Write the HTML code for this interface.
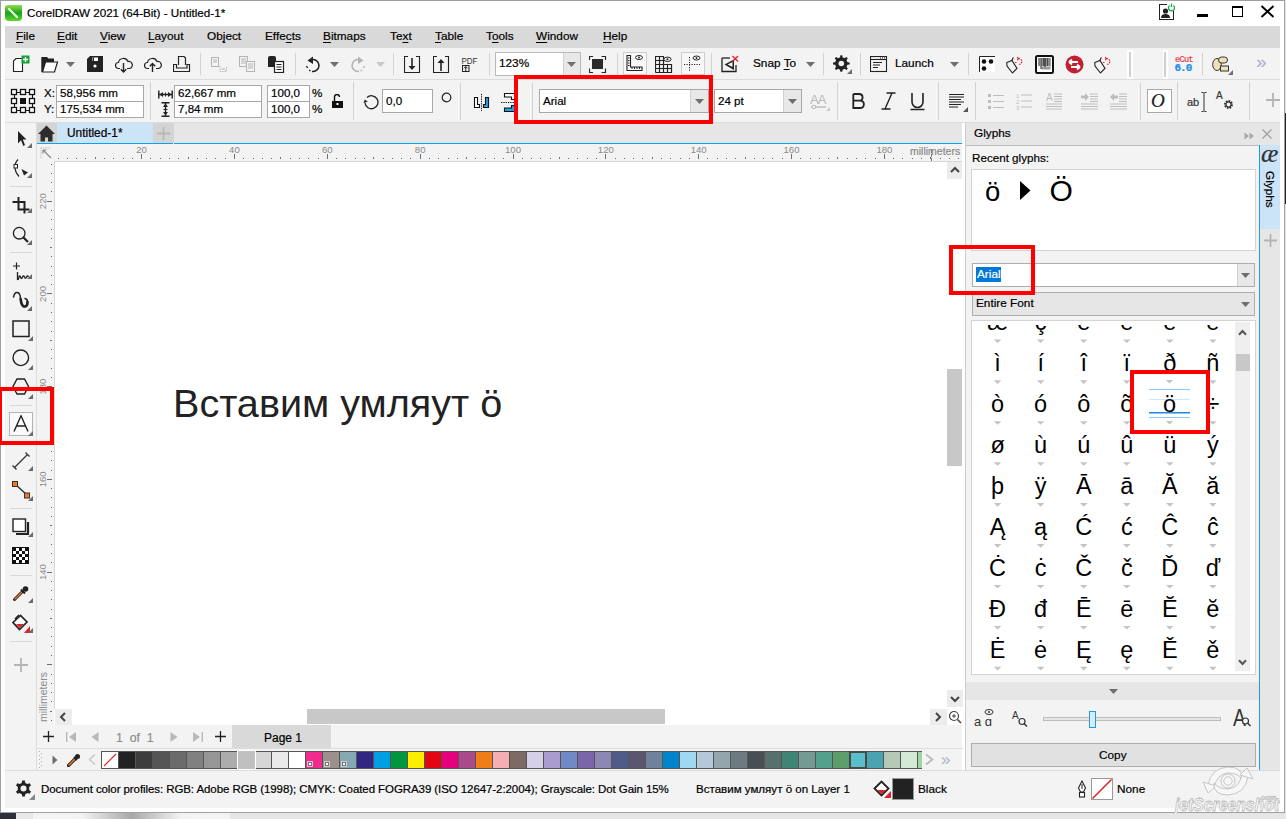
<!DOCTYPE html><html><head><meta charset="utf-8"><style>
*{margin:0;padding:0;box-sizing:border-box}
html,body{width:1286px;height:819px;overflow:hidden;background:#e6e6e6;font-family:"Liberation Sans",sans-serif}
.t{position:absolute;white-space:nowrap;line-height:1;font-family:"Liberation Sans",sans-serif;-webkit-text-stroke:0.2px currentColor}
div{position:absolute}
u{text-decoration:underline;text-underline-offset:2px}
</style></head><body><div style="position:absolute;left:0px;top:813px;width:16px;height:6px;background:#2b2f38"></div><div style="position:absolute;left:16px;top:813px;width:17px;height:6px;background:#e8e8e8"></div><div style="position:absolute;left:33px;top:813px;width:197px;height:6px;background:linear-gradient(90deg,#f4f4f4 0%,#f3f3f3 25%,#a8a8a8 50%,#f3f3f3 75%,#f4f4f4 100%)"></div><div style="position:absolute;left:230px;top:813px;width:1056px;height:6px;background:#e6e6e6"></div><div style="position:absolute;left:1285px;top:113px;width:1px;height:91px;background:#222"></div><div style="position:absolute;left:0px;top:0px;width:1285px;height:813px;background:#fff;border:1px solid #a0a0a0"></div><svg style="position:absolute;left:5px;top:5px;" width="17" height="16" viewBox="0 0 17 16"><defs><linearGradient id="g1" x1="0" y1="0" x2="0" y2="1"><stop offset="0" stop-color="#8fe04a"/><stop offset="0.5" stop-color="#1f9e1f"/><stop offset="1" stop-color="#5fd82a"/></linearGradient></defs><path d="M3 0H17V12Q17 16 13 16H4Q0 16 0 12V3Q0 0 3 0Z" fill="url(#g1)"/><path d="M4 4L12 12" stroke="#e8ffe0" stroke-width="2.2" stroke-linecap="round"/></svg><div class="t" style="left:27px;top:7px;font-size:11.65px;color:#000;">CorelDRAW 2021 (64-Bit) - Untitled-1*</div><div style="position:absolute;left:5px;top:26px;width:1275px;height:22px;background:#d9d9d9"></div><div class="t" style="left:16px;top:31px;font-size:11.8px;color:#000;"><u>F</u>ile</div><div class="t" style="left:57px;top:31px;font-size:11.8px;color:#000;"><u>E</u>dit</div><div class="t" style="left:100px;top:31px;font-size:11.8px;color:#000;"><u>V</u>iew</div><div class="t" style="left:148px;top:31px;font-size:11.8px;color:#000;"><u>L</u>ayout</div><div class="t" style="left:207px;top:31px;font-size:11.8px;color:#000;">Ob<u>j</u>ect</div><div class="t" style="left:265px;top:31px;font-size:11.8px;color:#000;">Effe<u>c</u>ts</div><div class="t" style="left:323px;top:31px;font-size:11.8px;color:#000;"><u>B</u>itmaps</div><div class="t" style="left:390px;top:31px;font-size:11.8px;color:#000;">Te<u>x</u>t</div><div class="t" style="left:435px;top:31px;font-size:11.8px;color:#000;"><u>T</u>able</div><div class="t" style="left:486px;top:31px;font-size:11.8px;color:#000;">T<u>o</u>ols</div><div class="t" style="left:536px;top:31px;font-size:11.8px;color:#000;"><u>W</u>indow</div><div class="t" style="left:603px;top:31px;font-size:11.8px;color:#000;"><u>H</u>elp</div><div style="position:absolute;left:5px;top:48px;width:1275px;height:31px;background:#f3f3f3"></div><div style="position:absolute;left:5px;top:79px;width:1275px;height:1px;background:#dcdcdc"></div><div style="position:absolute;left:5px;top:80px;width:1275px;height:42px;background:#f3f3f3"></div><div style="position:absolute;left:5px;top:122px;width:1275px;height:1px;background:#dcdcdc"></div><div style="position:absolute;left:5px;top:123px;width:32px;height:647px;background:#f3f3f3"></div><div style="position:absolute;left:36px;top:123px;width:1px;height:647px;background:#dcdcdc"></div><div style="position:absolute;left:37px;top:123px;width:926px;height:20px;background:#e6e6e6"></div><div style="position:absolute;left:37px;top:123px;width:20px;height:20px;background:#d4d4d4"></div><div style="position:absolute;left:57px;top:123px;width:96px;height:20px;background:#cce4f7"></div><div style="position:absolute;left:153px;top:123px;width:21px;height:20px;background:#d4d4d4"></div><div style="position:absolute;left:37px;top:143px;width:136px;height:1px;background:#08a4f4"></div><div style="position:absolute;left:174px;top:143px;width:789px;height:1px;background:#08a4f4"></div><div style="position:absolute;left:37px;top:144px;width:926px;height:1px;background:#f3f3f3"></div><div style="position:absolute;left:37px;top:144px;width:926px;height:17px;background:#f3f3f3"></div><div style="position:absolute;left:37px;top:161px;width:926px;height:1px;background:#d8d8d8"></div><div style="position:absolute;left:37px;top:161px;width:17px;height:564px;background:#f3f3f3"></div><div style="position:absolute;left:54px;top:161px;width:1px;height:548px;background:#d8d8d8"></div><div style="position:absolute;left:55px;top:162px;width:908px;height:547px;background:#fff"></div><div style="position:absolute;left:947px;top:162px;width:16px;height:547px;background:#fff"></div><div style="position:absolute;left:947px;top:162px;width:16px;height:17px;background:#ececec"></div><div style="position:absolute;left:947px;top:369px;width:15px;height:97px;background:#c8c8c8"></div><div style="position:absolute;left:55px;top:709px;width:908px;height:16px;background:#fff"></div><div style="position:absolute;left:55px;top:709px;width:17px;height:16px;background:#ececec"></div><div style="position:absolute;left:307px;top:709px;width:358px;height:15px;background:#c8c8c8"></div><div style="position:absolute;left:37px;top:725px;width:926px;height:24px;background:#f3f3f3"></div><div style="position:absolute;left:232px;top:725px;width:99px;height:24px;background:#d9d9d9"></div><div style="position:absolute;left:37px;top:749px;width:926px;height:21px;background:#f3f3f3"></div><div style="position:absolute;left:962px;top:123px;width:3px;height:647px;background:#fff"></div><div style="position:absolute;left:965px;top:123px;width:1px;height:647px;background:#cdcdcd"></div><div style="position:absolute;left:966px;top:123px;width:314px;height:22px;background:#e6e6e6"></div><div style="position:absolute;left:966px;top:145px;width:293px;height:625px;background:#f3f3f3"></div><div style="position:absolute;left:1259px;top:145px;width:1px;height:625px;background:#1e9be8"></div><div style="position:absolute;left:1260px;top:145px;width:20px;height:84px;background:#cce4f7"></div><div style="position:absolute;left:1260px;top:229px;width:20px;height:541px;background:#e6e6e6"></div><div style="position:absolute;left:5px;top:770px;width:1275px;height:1px;background:#dcdcdc"></div><div style="position:absolute;left:5px;top:771px;width:1275px;height:37px;background:#f3f3f3"></div><svg style="position:absolute;left:1158px;top:3px;" width="18" height="17" viewBox="0 0 18 17"><rect x="1.5" y="1.5" width="14" height="15" fill="none" stroke="#222" stroke-width="1"/><rect x="9" y="0" width="9" height="8" fill="#fff"/><circle cx="7.5" cy="8" r="2.6" fill="#222"/><path d="M3 15Q3 11 7.5 11Q12 11 12 15Z" fill="#222"/><path d="M11.6 2.6A3 3 0 1 0 15.4 2.6" fill="none" stroke="#1aa84a" stroke-width="1.3"/><path d="M13.5 0.5V4" stroke="#1aa84a" stroke-width="1.3"/></svg><div style="position:absolute;left:1197px;top:14px;width:11px;height:3px;background:#000"></div><div style="position:absolute;left:1232px;top:6px;width:11px;height:11px;border:1px solid #000;border-top:2px solid #000"></div><svg style="position:absolute;left:1260px;top:5px;" width="15" height="13" viewBox="0 0 15 13"><path d="M1.5 1L13.5 12M13.5 1L1.5 12" stroke="#000" stroke-width="1.9"/></svg><svg style="position:absolute;left:12px;top:55px;" width="18" height="18" viewBox="0 0 18 18"><path d="M4 3.5H10.5V16.5H1.5V6Z" fill="#fff" stroke="#222" stroke-width="1.1"/><rect x="9.5" y="0.5" width="8" height="8" fill="#15a339"/><path d="M13.5 2V7M11 4.5H16" stroke="#fff" stroke-width="1.4"/></svg><svg style="position:absolute;left:41px;top:56px;" width="18" height="17" viewBox="0 0 18 17"><path d="M1 1H6L7.5 2.5H13V6H4.5L1.5 16H1Z" fill="#222"/><path d="M4.5 6H16.5L13.5 16H1.5Z" fill="#fff" stroke="#222" stroke-width="1.2"/><path d="M1 1V16" stroke="#222" stroke-width="1.4"/></svg><svg style="position:absolute;left:66px;top:62px;" width="9" height="5" viewBox="0 0 9 5"><path d="M0 0H9L4.5 5Z" fill="#6e6e6e"/></svg><svg style="position:absolute;left:87px;top:56px;" width="17" height="17" viewBox="0 0 17 17"><path d="M0 3L3 0H16V16H0Z" fill="#222"/><rect x="5" y="1.5" width="6" height="3.5" fill="#fff"/><rect x="5.5" y="1.5" width="1.5" height="3.5" fill="#222"/><circle cx="8" cy="10" r="1.6" fill="#fff"/></svg><svg style="position:absolute;left:115px;top:56px;" width="18" height="17" viewBox="0 0 18 17"><path d="M5 12.5H3.5A3 3 0 0 1 3.5 6.5A5 5 0 0 1 13 5.5A3.3 3.3 0 0 1 14.5 12.5H12" fill="none" stroke="#222" stroke-width="1.2"/><path d="M8.5 7V16M5.8 13.3L8.5 16L11.2 13.3" fill="none" stroke="#222" stroke-width="1.4"/></svg><svg style="position:absolute;left:144px;top:56px;" width="18" height="17" viewBox="0 0 18 17"><path d="M5 12.5H3.5A3 3 0 0 1 3.5 6.5A5 5 0 0 1 13 5.5A3.3 3.3 0 0 1 14.5 12.5H12" fill="none" stroke="#222" stroke-width="1.2"/><path d="M8.5 16V7.5M5.8 10.2L8.5 7.5L11.2 10.2" fill="none" stroke="#222" stroke-width="1.4"/></svg><svg style="position:absolute;left:173px;top:56px;" width="18" height="17" viewBox="0 0 18 17"><path d="M5.5 9V0.5H11L12.5 2V9" fill="none" stroke="#222" stroke-width="1.2"/><path d="M0.5 8.5H3.5V12H14V8.5H16.5V15.5H0.5Z" fill="none" stroke="#222" stroke-width="1.2"/></svg><div style="position:absolute;left:200px;top:53px;width:1px;height:22px;background:#d2d2d2"></div><svg style="position:absolute;left:210px;top:56px;" width="18" height="17" viewBox="0 0 18 17"><rect x="1.5" y="1.5" width="7" height="9" fill="none" stroke="#b4b4b4"/><path d="M3 4H7M3 6H7" stroke="#b4b4b4"/><path d="M10 10V15.5H16.5V10" fill="none" stroke="#b4b4b4" stroke-dasharray="1.5 1"/><path d="M11.5 13H15" stroke="#b4b4b4"/></svg><svg style="position:absolute;left:239px;top:56px;" width="18" height="17" viewBox="0 0 18 17"><rect x="0.5" y="0.5" width="8" height="10" fill="none" stroke="#b4b4b4"/><path d="M2 3H7M2 5H7M2 7H7" stroke="#b4b4b4"/><rect x="7.5" y="5.5" width="8" height="10" fill="#f3f3f3" stroke="#b4b4b4"/><path d="M9 8H14M9 10H14M9 12H14" stroke="#b4b4b4"/></svg><svg style="position:absolute;left:268px;top:55px;" width="18" height="18" viewBox="0 0 18 18"><path d="M0 3Q0 1 2 1H6Q8 1 8 3V12H0Z" fill="#222"/><rect x="6.5" y="6.5" width="9" height="11" fill="#fff" stroke="#222" stroke-width="1.2"/><path d="M8.5 9.5H13.5M8.5 12H13.5M8.5 14.5H13.5" stroke="#222" stroke-width="1.2"/></svg><div style="position:absolute;left:295px;top:53px;width:1px;height:22px;background:#d2d2d2"></div><svg style="position:absolute;left:305px;top:56px;" width="18" height="17" viewBox="0 0 18 17"><path d="M4 5A6 6 0 1 1 7 15.5" fill="none" stroke="#222" stroke-width="1.5"/><path d="M8 0.5L2.5 4.5L8 8Z" fill="#222"/><path d="M1.5 10L2.5 12M4 14L5.5 15" stroke="#222" stroke-width="1.3"/></svg><svg style="position:absolute;left:330px;top:62px;" width="9" height="5" viewBox="0 0 9 5"><path d="M0 0H9L4.5 5Z" fill="#6e6e6e"/></svg><svg style="position:absolute;left:349px;top:56px;" width="18" height="17" viewBox="0 0 18 17"><path d="M13 5A6 6 0 1 0 10 15.5" fill="none" stroke="#b4b4b4" stroke-width="1.5"/><path d="M9 0.5L14.5 4.5L9 8Z" fill="#b4b4b4"/><path d="M15.5 10L14.5 12M13 14L11.5 15" stroke="#b4b4b4" stroke-width="1.3"/></svg><svg style="position:absolute;left:376px;top:62px;" width="9" height="5" viewBox="0 0 9 5"><path d="M0 0H9L4.5 5Z" fill="#c8c8c8"/></svg><div style="position:absolute;left:393px;top:53px;width:1px;height:22px;background:#d2d2d2"></div><svg style="position:absolute;left:404px;top:56px;" width="17" height="18" viewBox="0 0 17 18"><path d="M4 0.5H0.5V16.5H15.5V0.5H12" fill="none" stroke="#222" stroke-width="1.1"/><path d="M8 2V11" stroke="#222" stroke-width="1.6"/><path d="M4.5 10H11.5L8 14Z" fill="#222"/></svg><svg style="position:absolute;left:433px;top:56px;" width="17" height="18" viewBox="0 0 17 18"><path d="M4 0.5H0.5V16.5H15.5V0.5H12" fill="none" stroke="#222" stroke-width="1.1"/><path d="M8 6V15" stroke="#222" stroke-width="1.6"/><path d="M4.5 7H11.5L8 3Z" fill="#222"/></svg><svg style="position:absolute;left:461px;top:56px;" width="20" height="9" viewBox="0 0 20 9"><text x="0.5" y="7.8" font-family="Liberation Sans" font-size="9" fill="#333" textLength="16" lengthAdjust="spacingAndGlyphs">PDF</text></svg><svg style="position:absolute;left:462px;top:65px;" width="8" height="7" viewBox="0 0 8 7"><rect x="0.5" y="0.5" width="6.5" height="6" fill="none" stroke="#222"/><path d="M3.75 1.5V6M2 3.3L3.75 1.5L5.5 3.3" fill="none" stroke="#222"/></svg><div style="position:absolute;left:489px;top:53px;width:1px;height:22px;background:#d2d2d2"></div><div style="position:absolute;left:495px;top:52px;width:86px;height:24px;background:#fff;border:1px solid #b9b9b9"></div><div style="position:absolute;left:563px;top:53px;width:17px;height:22px;background:#e8e8e8;border-left:1px solid #d0d0d0"></div><svg style="position:absolute;left:567px;top:62px;" width="9" height="5" viewBox="0 0 9 5"><path d="M0 0H9L4.5 5Z" fill="#6e6e6e"/></svg><div class="t" style="left:499px;top:58px;font-size:11.8px;color:#000;">123%</div><svg style="position:absolute;left:589px;top:56px;" width="18" height="17" viewBox="0 0 18 17"><rect x="3" y="3" width="11" height="10" fill="#2a2a2a"/><path d="M0.5 4V0.5H4M12.5 0.5H16.5V4M16.5 12.5V16.5H12.5M4 16.5H0.5V12.5" fill="none" stroke="#2a2a2a" stroke-width="1.2"/></svg><div style="position:absolute;left:617px;top:53px;width:1px;height:22px;background:#d2d2d2"></div><div style="position:absolute;left:623px;top:52px;width:24px;height:23px;background:#f8f8f8;border:1px solid #cdcdcd"></div><svg style="position:absolute;left:626px;top:55px;" width="18" height="17" viewBox="0 0 18 17"><path d="M1 0.5V15.5H16V12H4.5V0.5Z" fill="none" stroke="#222" stroke-width="1.1"/><path d="M2 3H3.5M2 5.5H3.5M2 8H3.5M2 10.5H3.5M6 14V12M8.5 14V12M11 14V12M13.5 14V12" stroke="#222"/><ellipse cx="13" cy="2.5" rx="3.5" ry="2" fill="none" stroke="#222"/><circle cx="13" cy="2.5" r="0.9" fill="#222"/></svg><svg style="position:absolute;left:655px;top:56px;" width="18" height="17" viewBox="0 0 18 17"><path d="M0.5 16.5V0.5H8.5V16.5M4.5 0.5V16.5M0.5 4.5H8.5M0.5 8.5H16.5V16.5H0.5M0.5 12.5H16.5M12.5 8.5V16.5" fill="none" stroke="#222" stroke-width="1.2"/><ellipse cx="12.5" cy="3.3" rx="3.6" ry="2.2" fill="#f3f3f3" stroke="#222"/><circle cx="12.5" cy="3.3" r="1" fill="#222"/></svg><div style="position:absolute;left:681px;top:52px;width:24px;height:23px;background:#f8f8f8;border:1px solid #cdcdcd"></div><svg style="position:absolute;left:684px;top:55px;" width="18" height="17" viewBox="0 0 18 17"><path d="M5.5 2V17M0 9.5H16" stroke="#222" stroke-dasharray="1.2 1.3"/><ellipse cx="12.5" cy="3" rx="3.5" ry="2" fill="none" stroke="#222"/><circle cx="12.5" cy="3" r="0.9" fill="#222"/></svg><div style="position:absolute;left:711px;top:53px;width:1px;height:22px;background:#d2d2d2"></div><svg style="position:absolute;left:721px;top:55px;" width="19" height="18" viewBox="0 0 19 18"><path d="M1 3V16.5H15V10" fill="none" stroke="#222" stroke-width="1.3"/><path d="M1 3H9" stroke="#222" stroke-width="1.3"/><path d="M3.5 9.5L13 4.5V15Z" fill="#222"/><path d="M6.5 9.5L11.5 7V12Z" fill="#f3f3f3"/><path d="M11.5 1L17 6.5M17 1L11.5 6.5" stroke="#e0202a" stroke-width="1.3"/></svg><div class="t" style="left:753px;top:58px;font-size:11.8px;color:#000;">Snap <u>T</u>o</div><svg style="position:absolute;left:806px;top:62px;" width="9" height="5" viewBox="0 0 9 5"><path d="M0 0H9L4.5 5Z" fill="#6e6e6e"/></svg><div style="position:absolute;left:823px;top:53px;width:1px;height:22px;background:#d2d2d2"></div><svg style="position:absolute;left:833px;top:55px;" width="19" height="19" viewBox="0 0 19 19"><path d="M8 0.5H10L10.5 3A6 6 0 0 1 12.6 4L14.8 2.6L16.2 4L14.8 6.2A6 6 0 0 1 15.8 8.3L18.3 8.8V10.8L15.8 11.3A6 6 0 0 1 14.8 13.4L16.2 15.6L14.8 17L12.6 15.6A6 6 0 0 1 10.5 16.6L10 19H8L7.5 16.6A6 6 0 0 1 5.4 15.6L3.2 17L1.8 15.6L3.2 13.4A6 6 0 0 1 2.2 11.3L-0.3 10.8V8.8L2.2 8.3A6 6 0 0 1 3.2 6.2L1.8 4L3.2 2.6L5.4 4A6 6 0 0 1 7.5 3Z" fill="#222" transform="translate(0.2,-0.3) scale(0.9)"/><circle cx="8.3" cy="8.5" r="2.8" fill="#f3f3f3"/><path d="M14 19L19 14V19Z" fill="#6e6e6e"/></svg><div style="position:absolute;left:860px;top:53px;width:1px;height:22px;background:#d2d2d2"></div><svg style="position:absolute;left:870px;top:56px;" width="18" height="17" viewBox="0 0 18 17"><rect x="0.5" y="0.5" width="16" height="15" fill="none" stroke="#222" stroke-width="1.1"/><path d="M0.5 3.5H16.5" stroke="#222" stroke-width="1.1"/><path d="M10 2H11M12 2H13M14 2H15" stroke="#222"/><path d="M3 6.5H12M3 9H10M3 11.5H8" stroke="#222" stroke-width="1.1"/></svg><div class="t" style="left:895px;top:58px;font-size:11.8px;color:#000;">Launch</div><svg style="position:absolute;left:950px;top:62px;" width="9" height="5" viewBox="0 0 9 5"><path d="M0 0H9L4.5 5Z" fill="#6e6e6e"/></svg><div style="position:absolute;left:968px;top:53px;width:1px;height:22px;background:#d2d2d2"></div><svg style="position:absolute;left:979px;top:56px;" width="18" height="18" viewBox="0 0 18 18"><path d="M0.5 0.5V16" stroke="#222"/><path d="M0.5 0.5H16" stroke="#222"/><rect x="1" y="1" width="15" height="15" fill="#fff"/><circle cx="5" cy="5.5" r="2.3" fill="#111"/><circle cx="12" cy="5.5" r="2.3" fill="#111"/><circle cx="5" cy="12.5" r="2.3" fill="#111"/></svg><svg style="position:absolute;left:1006px;top:56px;" width="18" height="18" viewBox="0 0 18 18"><path d="M0.8 6.5L6 4.5L11 12.5L6.5 17L1 10Z" fill="none" stroke="#222" stroke-width="1.1"/><path d="M5.5 5L7.5 1.5" stroke="#222" stroke-width="1.1"/><path d="M12.5 2.5A3 3 0 1 1 13 8.5" fill="none" stroke="#e0202a" stroke-width="1.2" stroke-dasharray="1.5 1"/><path d="M11 1.2L12.8 2.6L11.2 4" fill="none" stroke="#e0202a" stroke-width="1.1"/><path d="M9 6.5H10.5" stroke="#e0202a"/></svg><svg style="position:absolute;left:1035px;top:55px;" width="19" height="19" viewBox="0 0 19 19"><rect x="1" y="1" width="17" height="17" rx="1.5" fill="#fff" stroke="#111" stroke-width="2"/><rect x="3.5" y="3" width="0.8" height="8" fill="#222"/><rect x="4.6" y="3" width="0.5" height="8" fill="#222"/><rect x="5.5" y="3" width="1.2" height="11" fill="#222"/><rect x="7" y="3" width="0.5" height="8" fill="#222"/><rect x="8" y="3" width="0.8" height="8" fill="#222"/><rect x="9.2" y="3" width="1.6" height="11" fill="#222"/><rect x="11.3" y="3" width="0.5" height="8" fill="#222"/><rect x="12.2" y="3" width="1" height="8" fill="#222"/><rect x="13.6" y="3" width="0.6" height="8" fill="#222"/><rect x="14.6" y="3" width="0.8" height="8" fill="#222"/><rect x="6.5" y="11.5" width="9" height="3" fill="#999"/></svg><svg style="position:absolute;left:1065px;top:55px;" width="19" height="19" viewBox="0 0 19 19"><circle cx="9.5" cy="9.5" r="9" fill="#c2202e"/><path d="M4 7H13M4 7L7 4.5M4 7L7 9.5" fill="none" stroke="#fff" stroke-width="1.8"/><path d="M15 12H6M15 12L12 9.5M15 12L12 14.5" fill="none" stroke="#fff" stroke-width="1.8"/></svg><svg style="position:absolute;left:1094px;top:56px;" width="18" height="18" viewBox="0 0 18 18"><path d="M0.8 6.5L6 4.5L11 12.5L6.5 17L1 10Z" fill="none" stroke="#222" stroke-width="1.1"/><path d="M5.5 5L7.5 1.5" stroke="#222" stroke-width="1.1"/><path d="M12.5 2.5A3 3 0 1 1 13 8.5" fill="none" stroke="#e0202a" stroke-width="1.2" stroke-dasharray="1.5 1"/><path d="M11 1.2L12.8 2.6L11.2 4" fill="none" stroke="#e0202a" stroke-width="1.1"/><path d="M9 6.5H10.5" stroke="#e0202a"/></svg><div style="position:absolute;left:1127px;top:50px;width:6px;height:29px;background:#fff"></div><div style="position:absolute;left:1129px;top:52px;width:2px;height:25px;background:#d0d0d0"></div><div style="position:absolute;left:1163px;top:50px;width:5px;height:29px;background:#fff"></div><div style="position:absolute;left:1164px;top:52px;width:2px;height:25px;background:#d0d0d0"></div><div class="t" style="left:1175px;top:56px;font-size:8.5px;color:#e83a4a;font-family:'Liberation Mono',monospace;letter-spacing:-0.6px">eCut</div><div class="t" style="left:1174.5px;top:63px;font-size:11px;color:#1a8fe8;font-family:'Liberation Mono',monospace;font-weight:bold;letter-spacing:-1px">6.0</div><div style="position:absolute;left:1202px;top:53px;width:1px;height:22px;background:#d2d2d2"></div><svg style="position:absolute;left:1212px;top:55px;" width="22" height="20" viewBox="0 0 22 20"><ellipse cx="5" cy="9.5" rx="4.3" ry="6" fill="#efe2b8" stroke="#333"/><rect x="6.5" y="2" width="9" height="6" rx="3" fill="#efe2b8" stroke="#333"/><rect x="8.5" y="11" width="8" height="5" fill="#efe2b8" stroke="#333"/><path d="M16 20L21 15V20Z" fill="#6e6e6e"/></svg><div class="t" style="left:1256px;top:52px;font-size:19px;color:#b0b4cc;">&#187;</div><svg style="position:absolute;left:10px;top:88px;" width="26" height="26" viewBox="0 0 26 26"><rect x="1.5" y="1.5" width="5" height="5" fill="#fff" stroke="#111" stroke-width="1.3"/><rect x="1.5" y="10.5" width="5" height="5" fill="#fff" stroke="#111" stroke-width="1.3"/><rect x="1.5" y="19.5" width="5" height="5" fill="#fff" stroke="#111" stroke-width="1.3"/><rect x="10.5" y="1.5" width="5" height="5" fill="#fff" stroke="#111" stroke-width="1.3"/><rect x="10.5" y="19.5" width="5" height="5" fill="#fff" stroke="#111" stroke-width="1.3"/><rect x="19.5" y="1.5" width="5" height="5" fill="#fff" stroke="#111" stroke-width="1.3"/><rect x="19.5" y="10.5" width="5" height="5" fill="#fff" stroke="#111" stroke-width="1.3"/><rect x="19.5" y="19.5" width="5" height="5" fill="#fff" stroke="#111" stroke-width="1.3"/><path d="M7 4.5H10M16 4.5H19M7 22.5H10M16 22.5H19M4.5 7V10M4.5 16V19M22.5 7V10M22.5 16V19" stroke="#111" stroke-width="1.1"/><rect x="10" y="10" width="6" height="6" fill="#111"/></svg><div class="t" style="left:44px;top:87px;font-size:11.6px;color:#000;">X:</div><div class="t" style="left:44px;top:103px;font-size:11.6px;color:#000;">Y:</div><div style="position:absolute;left:56px;top:85px;width:88px;height:17px;background:#fff;border:1px solid #a8a8a8"></div><div style="position:absolute;left:56px;top:101px;width:88px;height:17px;background:#fff;border:1px solid #a8a8a8"></div><div class="t" style="left:60px;top:87px;font-size:11.6px;color:#000;">58,956 mm</div><div class="t" style="left:60px;top:103px;font-size:11.6px;color:#000;">175,534 mm</div><div style="position:absolute;left:150px;top:82px;width:1px;height:38px;background:#d2d2d2"></div><svg style="position:absolute;left:158px;top:90px;" width="15" height="9" viewBox="0 0 15 9"><path d="M0.8 0.5V8.5M14.2 0.5V8.5M1 4.5H14" stroke="#222" stroke-width="1.4"/><path d="M1.5 4.5L5 2V7Z M13.5 4.5L10 2V7Z" fill="#222"/><path d="M7.5 2.5V6.5" stroke="#222"/></svg><svg style="position:absolute;left:161px;top:102px;" width="9" height="15" viewBox="0 0 9 15"><path d="M0.5 0.8H8.5M0.5 14.2H8.5M4.5 1V14" stroke="#222" stroke-width="1.4"/><path d="M4.5 1.5L2 5H7Z M4.5 13.5L2 10H7Z" fill="#222"/><path d="M2.5 7.5H6.5" stroke="#222"/></svg><div style="position:absolute;left:174px;top:85px;width:88px;height:17px;background:#fff;border:1px solid #a8a8a8"></div><div style="position:absolute;left:174px;top:101px;width:88px;height:17px;background:#fff;border:1px solid #a8a8a8"></div><div class="t" style="left:178px;top:87px;font-size:11.6px;color:#000;">62,667 mm</div><div class="t" style="left:178px;top:103px;font-size:11.6px;color:#000;">7,84 mm</div><div style="position:absolute;left:267px;top:85px;width:43px;height:17px;background:#fff;border:1px solid #a8a8a8"></div><div style="position:absolute;left:267px;top:101px;width:43px;height:17px;background:#fff;border:1px solid #a8a8a8"></div><div class="t" style="left:271px;top:87px;font-size:11.6px;color:#000;">100,0</div><div class="t" style="left:271px;top:103px;font-size:11.6px;color:#000;">100,0</div><div class="t" style="left:312px;top:87px;font-size:11.6px;color:#000;">%</div><div class="t" style="left:312px;top:103px;font-size:11.6px;color:#000;">%</div><svg style="position:absolute;left:331px;top:94px;" width="13" height="14" viewBox="0 0 13 14"><path d="M3.5 7V3A2.5 2.5 0 0 1 8.5 3" fill="none" stroke="#111" stroke-width="1.4"/><rect x="1" y="7" width="11" height="7" fill="#111"/><rect x="5.5" y="9" width="2" height="2" fill="#fff"/></svg><div style="position:absolute;left:353px;top:82px;width:1px;height:38px;background:#d2d2d2"></div><svg style="position:absolute;left:362px;top:93px;" width="19" height="17" viewBox="0 0 19 17"><path d="M5 4.5A6.5 6.5 0 1 1 3 10" fill="none" stroke="#222" stroke-width="1.3"/><path d="M1 9.5L3.2 6.5L5.5 9.5Z" fill="#222" transform="rotate(-15 3 8)"/></svg><div style="position:absolute;left:382px;top:89px;width:51px;height:24px;background:#fff;border:1px solid #a8a8a8"></div><div class="t" style="left:386px;top:95px;font-size:11.6px;color:#000;">0,0</div><svg style="position:absolute;left:441px;top:92px;" width="11" height="11" viewBox="0 0 11 11"><circle cx="5.5" cy="5.5" r="4.3" fill="none" stroke="#222" stroke-width="1.2"/></svg><div style="position:absolute;left:460px;top:82px;width:1px;height:38px;background:#d2d2d2"></div><svg style="position:absolute;left:473px;top:93px;" width="17" height="18" viewBox="0 0 17 18"><path d="M1.5 4.5V14.5H6.5V11.5H4.5V4.5Z" fill="#fff" stroke="#111" stroke-width="1.1"/><path d="M15.5 4.5V14.5H10.5V11.5H12.5V4.5Z" fill="#1fa3ec" stroke="#111" stroke-width="1.1"/><path d="M8.5 1V18" stroke="#111" stroke-dasharray="1.3 1"/></svg><svg style="position:absolute;left:501px;top:92px;" width="17" height="21" viewBox="0 0 17 21"><path d="M3.5 1.5H14.5V7.5H10.5V5H3.5Z" fill="#fff" stroke="#111" stroke-width="1.1"/><path d="M3.5 19.5H14.5V13.5H10.5V16H3.5Z" fill="#1fa3ec" stroke="#111" stroke-width="1.1"/><path d="M0 10.5H17" stroke="#111" stroke-dasharray="1.3 1"/></svg><div style="position:absolute;left:532px;top:82px;width:1px;height:38px;background:#d2d2d2"></div><div style="position:absolute;left:539px;top:89px;width:170px;height:24px;background:#fff;border:1px solid #a8a8a8"></div><div style="position:absolute;left:690px;top:90px;width:18px;height:22px;background:#e8e8e8;border-left:1px solid #d0d0d0"></div><svg style="position:absolute;left:695px;top:99px;" width="9" height="5" viewBox="0 0 9 5"><path d="M0 0H9L4.5 5Z" fill="#6e6e6e"/></svg><div class="t" style="left:543px;top:94.5px;font-size:11.6px;color:#000;">Arial</div><div style="position:absolute;left:714px;top:89px;width:88px;height:24px;background:#fff;border:1px solid #a8a8a8"></div><div style="position:absolute;left:783px;top:90px;width:18px;height:22px;background:#e8e8e8;border-left:1px solid #d0d0d0"></div><svg style="position:absolute;left:788px;top:99px;" width="9" height="5" viewBox="0 0 9 5"><path d="M0 0H9L4.5 5Z" fill="#6e6e6e"/></svg><div class="t" style="left:718px;top:95px;font-size:11.6px;color:#000;">24 pt</div><svg style="position:absolute;left:810px;top:92px;" width="21" height="19" viewBox="0 0 21 19"><text x="0" y="12" font-family="Liberation Sans" font-size="13" fill="#b8b8b8" letter-spacing="-1">AA</text><path d="M1 15H16" stroke="#b8b8b8" stroke-width="1.4"/><circle cx="4" cy="15" r="1.8" fill="#f3f3f3" stroke="#b8b8b8"/><path d="M16 19L20 15V19Z" fill="#c8c8c8"/></svg><div style="position:absolute;left:837px;top:82px;width:1px;height:38px;background:#d2d2d2"></div><svg style="position:absolute;left:852px;top:93px;" width="14" height="16" viewBox="0 0 14 16"><path d="M1.3 1H7Q10.6 1 10.6 4.4Q10.6 7.6 7 7.6H1.3M1.3 7.6H7.8Q11.9 7.6 11.9 11.2Q11.9 15 7.8 15H1.3V1" fill="none" stroke="#222" stroke-width="1.8" stroke-linejoin="miter"/></svg><svg style="position:absolute;left:880px;top:92px;" width="17" height="18" viewBox="0 0 17 18"><path d="M6.5 1H15.5M1.5 17H10.5M12 1L5 17" stroke="#222" stroke-width="1.4"/></svg><svg style="position:absolute;left:909px;top:92px;" width="17" height="19" viewBox="0 0 17 19"><path d="M3 1V10A5.5 5.5 0 0 0 14 10V1" fill="none" stroke="#222" stroke-width="1.6"/><path d="M1.5 17.5H15.5" stroke="#222" stroke-width="1.5"/></svg><div style="position:absolute;left:938px;top:82px;width:1px;height:38px;background:#d2d2d2"></div><svg style="position:absolute;left:948px;top:93px;" width="21" height="19" viewBox="0 0 21 19"><path d="M1 1.5H16M1 4H16M1 6.5H13M1 9H16M1 11.5H13M1 14H10" stroke="#222" stroke-width="1.2"/><path d="M15 19L20 14V19Z" fill="#555"/></svg><div style="position:absolute;left:975px;top:82px;width:1px;height:38px;background:#d2d2d2"></div><svg style="position:absolute;left:988px;top:93px;" width="18" height="16" viewBox="0 0 18 16"><rect x="0" y="1" width="3" height="3" fill="#bdbdbd"/><rect x="0" y="7" width="3" height="3" fill="#bdbdbd"/><rect x="0" y="13" width="3" height="3" fill="#bdbdbd"/><path d="M5 2.5H16M5 8.5H16M5 14.5H16" stroke="#bdbdbd" stroke-width="1.2"/></svg><svg style="position:absolute;left:1016px;top:92px;" width="18" height="18" viewBox="0 0 18 18"><text x="0" y="6" font-family="Liberation Sans" font-size="6" fill="#bdbdbd">1</text><text x="0" y="12" font-family="Liberation Sans" font-size="6" fill="#bdbdbd">2</text><text x="0" y="18" font-family="Liberation Sans" font-size="6" fill="#bdbdbd">3</text><path d="M5 3H16M5 9H16M5 15H16" stroke="#bdbdbd" stroke-width="1.2"/></svg><svg style="position:absolute;left:1046px;top:92px;" width="18" height="18" viewBox="0 0 18 18"><text x="0" y="9" font-family="Liberation Sans" font-size="10" fill="#bdbdbd">A</text><path d="M8 2H16M8 4.5H16M8 7H16M8 9.5H16M0 12H16M0 14.5H16M0 17H16" stroke="#bdbdbd" stroke-width="1.1"/></svg><svg style="position:absolute;left:1081px;top:92px;" width="18" height="18" viewBox="0 0 18 18"><path d="M0 3.5H4V1L8 5L4 9V6.5H0Z" fill="#bdbdbd"/><path d="M9 2H17M9 4.5H17M9 7H17M9 9.5H17M0 12H17M0 14.5H17M0 17H17" stroke="#bdbdbd" stroke-width="1.1"/></svg><svg style="position:absolute;left:1110px;top:92px;" width="18" height="18" viewBox="0 0 18 18"><path d="M8 3.5H4V1L0 5L4 9V6.5H8Z" fill="#bdbdbd"/><path d="M9 2H17M9 4.5H17M9 7H17M9 9.5H17M0 12H17M0 14.5H17M0 17H17" stroke="#bdbdbd" stroke-width="1.1"/></svg><div style="position:absolute;left:1140px;top:82px;width:1px;height:38px;background:#d2d2d2"></div><div style="position:absolute;left:1147px;top:89px;width:25px;height:24px;background:#fff;border:1px solid #a8a8a8"></div><div class="t" style="left:1151px;top:91px;font-size:19px;color:#222;font-style:italic;font-family:'Liberation Serif',serif">O</div><div style="position:absolute;left:1177px;top:82px;width:1px;height:38px;background:#d2d2d2"></div><div class="t" style="left:1187px;top:97px;font-size:11px;color:#333;">ab</div><svg style="position:absolute;left:1201px;top:91px;" width="6" height="22" viewBox="0 0 6 22"><path d="M0.5 1.5H2.5M3.5 1.5H5.5M3 1.5V20.5M0.5 20.5H2.5M3.5 20.5H5.5" stroke="#333"/></svg><div class="t" style="left:1216px;top:91px;font-size:10px;color:#333;">A</div><svg style="position:absolute;left:1223px;top:99px;" width="11" height="11" viewBox="0 0 11 11"><circle cx="5.5" cy="5.5" r="3.4" fill="none" stroke="#333" stroke-width="2.2" stroke-dasharray="1.6 1"/><circle cx="5.5" cy="5.5" r="2.6" fill="none" stroke="#333" stroke-width="1.2"/></svg><div style="position:absolute;left:1249px;top:82px;width:1px;height:38px;background:#d2d2d2"></div><svg style="position:absolute;left:1266px;top:93px;" width="14" height="14" viewBox="0 0 14 14"><path d="M7 0V14M0 7H14" stroke="#b4b4b4" stroke-width="1.8"/></svg><svg style="position:absolute;left:38px;top:125px;" width="17" height="17" viewBox="0 0 17 17"><path d="M8.5 0.5L0 9H2.5V16.5H7V12.5H10V16.5H14.5V9H17Z" fill="#2d2d2d"/></svg><div class="t" style="left:67px;top:128px;font-size:11.9px;color:#000;">Untitled-1*</div><svg style="position:absolute;left:157px;top:127px;" width="13" height="13" viewBox="0 0 13 13"><path d="M6.5 0V13M0 6.5H13" stroke="#b8b8b8" stroke-width="1.8"/></svg><svg style="position:absolute;left:0;top:0" width="1286" height="819"><rect x="58" y="158" width="1" height="1" fill="#666"/><rect x="67" y="158" width="1" height="1" fill="#666"/><rect x="76" y="158" width="1" height="1" fill="#666"/><rect x="85" y="158" width="1" height="1" fill="#666"/><path d="M95.5 157V159" stroke="#707070"/><rect x="104" y="158" width="1" height="1" fill="#666"/><rect x="113" y="158" width="1" height="1" fill="#666"/><rect x="123" y="158" width="1" height="1" fill="#666"/><rect x="132" y="158" width="1" height="1" fill="#666"/><path d="M141.5 154V159" stroke="#707070"/><text x="141.6" y="153" text-anchor="middle" font-family="Liberation Sans" font-size="9.6" fill="#8a8a8a">20</text><rect x="150" y="158" width="1" height="1" fill="#666"/><rect x="160" y="158" width="1" height="1" fill="#666"/><rect x="169" y="158" width="1" height="1" fill="#666"/><rect x="178" y="158" width="1" height="1" fill="#666"/><path d="M188.5 157V159" stroke="#707070"/><rect x="197" y="158" width="1" height="1" fill="#666"/><rect x="206" y="158" width="1" height="1" fill="#666"/><rect x="215" y="158" width="1" height="1" fill="#666"/><rect x="225" y="158" width="1" height="1" fill="#666"/><path d="M234.5 154V159" stroke="#707070"/><text x="234.45" y="153" text-anchor="middle" font-family="Liberation Sans" font-size="9.6" fill="#8a8a8a">40</text><rect x="243" y="158" width="1" height="1" fill="#666"/><rect x="253" y="158" width="1" height="1" fill="#666"/><rect x="262" y="158" width="1" height="1" fill="#666"/><rect x="271" y="158" width="1" height="1" fill="#666"/><path d="M280.5 157V159" stroke="#707070"/><rect x="290" y="158" width="1" height="1" fill="#666"/><rect x="299" y="158" width="1" height="1" fill="#666"/><rect x="308" y="158" width="1" height="1" fill="#666"/><rect x="318" y="158" width="1" height="1" fill="#666"/><path d="M327.5 154V159" stroke="#707070"/><text x="327.29999999999995" y="153" text-anchor="middle" font-family="Liberation Sans" font-size="9.6" fill="#8a8a8a">60</text><rect x="336" y="158" width="1" height="1" fill="#666"/><rect x="345" y="158" width="1" height="1" fill="#666"/><rect x="355" y="158" width="1" height="1" fill="#666"/><rect x="364" y="158" width="1" height="1" fill="#666"/><path d="M373.5 157V159" stroke="#707070"/><rect x="383" y="158" width="1" height="1" fill="#666"/><rect x="392" y="158" width="1" height="1" fill="#666"/><rect x="401" y="158" width="1" height="1" fill="#666"/><rect x="410" y="158" width="1" height="1" fill="#666"/><path d="M420.5 154V159" stroke="#707070"/><text x="420.15" y="153" text-anchor="middle" font-family="Liberation Sans" font-size="9.6" fill="#8a8a8a">80</text><rect x="429" y="158" width="1" height="1" fill="#666"/><rect x="438" y="158" width="1" height="1" fill="#666"/><rect x="448" y="158" width="1" height="1" fill="#666"/><rect x="457" y="158" width="1" height="1" fill="#666"/><path d="M466.5 157V159" stroke="#707070"/><rect x="475" y="158" width="1" height="1" fill="#666"/><rect x="485" y="158" width="1" height="1" fill="#666"/><rect x="494" y="158" width="1" height="1" fill="#666"/><rect x="503" y="158" width="1" height="1" fill="#666"/><path d="M513.5 154V159" stroke="#707070"/><text x="513.0" y="153" text-anchor="middle" font-family="Liberation Sans" font-size="9.6" fill="#8a8a8a">100</text><rect x="522" y="158" width="1" height="1" fill="#666"/><rect x="531" y="158" width="1" height="1" fill="#666"/><rect x="540" y="158" width="1" height="1" fill="#666"/><rect x="550" y="158" width="1" height="1" fill="#666"/><path d="M559.5 157V159" stroke="#707070"/><rect x="568" y="158" width="1" height="1" fill="#666"/><rect x="577" y="158" width="1" height="1" fill="#666"/><rect x="587" y="158" width="1" height="1" fill="#666"/><rect x="596" y="158" width="1" height="1" fill="#666"/><path d="M605.5 154V159" stroke="#707070"/><text x="605.85" y="153" text-anchor="middle" font-family="Liberation Sans" font-size="9.6" fill="#8a8a8a">120</text><rect x="615" y="158" width="1" height="1" fill="#666"/><rect x="624" y="158" width="1" height="1" fill="#666"/><rect x="633" y="158" width="1" height="1" fill="#666"/><rect x="642" y="158" width="1" height="1" fill="#666"/><path d="M652.5 157V159" stroke="#707070"/><rect x="661" y="158" width="1" height="1" fill="#666"/><rect x="670" y="158" width="1" height="1" fill="#666"/><rect x="680" y="158" width="1" height="1" fill="#666"/><rect x="689" y="158" width="1" height="1" fill="#666"/><path d="M698.5 154V159" stroke="#707070"/><text x="698.7" y="153" text-anchor="middle" font-family="Liberation Sans" font-size="9.6" fill="#8a8a8a">140</text><rect x="707" y="158" width="1" height="1" fill="#666"/><rect x="717" y="158" width="1" height="1" fill="#666"/><rect x="726" y="158" width="1" height="1" fill="#666"/><rect x="735" y="158" width="1" height="1" fill="#666"/><path d="M745.5 157V159" stroke="#707070"/><rect x="754" y="158" width="1" height="1" fill="#666"/><rect x="763" y="158" width="1" height="1" fill="#666"/><rect x="772" y="158" width="1" height="1" fill="#666"/><rect x="782" y="158" width="1" height="1" fill="#666"/><path d="M791.5 154V159" stroke="#707070"/><text x="791.5500000000001" y="153" text-anchor="middle" font-family="Liberation Sans" font-size="9.6" fill="#8a8a8a">160</text><rect x="800" y="158" width="1" height="1" fill="#666"/><rect x="810" y="158" width="1" height="1" fill="#666"/><rect x="819" y="158" width="1" height="1" fill="#666"/><rect x="828" y="158" width="1" height="1" fill="#666"/><path d="M837.5 157V159" stroke="#707070"/><rect x="847" y="158" width="1" height="1" fill="#666"/><rect x="856" y="158" width="1" height="1" fill="#666"/><rect x="865" y="158" width="1" height="1" fill="#666"/><rect x="875" y="158" width="1" height="1" fill="#666"/><path d="M884.5 154V159" stroke="#707070"/><text x="884.4" y="153" text-anchor="middle" font-family="Liberation Sans" font-size="9.6" fill="#8a8a8a">180</text><rect x="893" y="158" width="1" height="1" fill="#666"/><rect x="902" y="158" width="1" height="1" fill="#666"/><rect x="912" y="158" width="1" height="1" fill="#666"/><rect x="921" y="158" width="1" height="1" fill="#666"/><path d="M930.5 157V159" stroke="#707070"/><rect x="940" y="158" width="1" height="1" fill="#666"/><rect x="949" y="158" width="1" height="1" fill="#666"/><rect x="958" y="158" width="1" height="1" fill="#666"/></svg><div class="t" style="left:910px;top:146px;font-size:10.5px;color:#8a8a8a;">millimeters</div><div style="position:absolute;left:931px;top:150px;width:1px;height:11px;border-left:1px dashed #777"></div><svg style="position:absolute;left:40px;top:147px;" width="13" height="13" viewBox="0 0 13 13"><path d="M3 3L11 11M3 3H6.5M3 3V6.5" fill="none" stroke="#888" stroke-width="1.2"/><path d="M1 1V12M1 1H12" stroke="#aaa" stroke-dasharray="1 1.2"/></svg><svg style="position:absolute;left:0;top:0" width="1286" height="819"><rect x="51" y="164" width="1" height="1" fill="#666"/><rect x="51" y="173" width="1" height="1" fill="#666"/><rect x="51" y="182" width="1" height="1" fill="#666"/><rect x="51" y="191" width="1" height="1" fill="#666"/><path d="M47 201.5H52" stroke="#707070"/><text transform="translate(45.8 201.2) rotate(-90)" text-anchor="middle" font-family="Liberation Sans" font-size="9.6" fill="#8a8a8a">220</text><rect x="51" y="210" width="1" height="1" fill="#666"/><rect x="51" y="219" width="1" height="1" fill="#666"/><rect x="51" y="229" width="1" height="1" fill="#666"/><rect x="51" y="238" width="1" height="1" fill="#666"/><path d="M50 247.5H52" stroke="#707070"/><rect x="51" y="256" width="1" height="1" fill="#666"/><rect x="51" y="266" width="1" height="1" fill="#666"/><rect x="51" y="275" width="1" height="1" fill="#666"/><rect x="51" y="284" width="1" height="1" fill="#666"/><path d="M47 293.5H52" stroke="#707070"/><text transform="translate(45.8 293.91999999999996) rotate(-90)" text-anchor="middle" font-family="Liberation Sans" font-size="9.6" fill="#8a8a8a">200</text><rect x="51" y="303" width="1" height="1" fill="#666"/><rect x="51" y="312" width="1" height="1" fill="#666"/><rect x="51" y="321" width="1" height="1" fill="#666"/><rect x="51" y="331" width="1" height="1" fill="#666"/><path d="M50 340.5H52" stroke="#707070"/><rect x="51" y="349" width="1" height="1" fill="#666"/><rect x="51" y="358" width="1" height="1" fill="#666"/><rect x="51" y="368" width="1" height="1" fill="#666"/><rect x="51" y="377" width="1" height="1" fill="#666"/><path d="M47 386.5H52" stroke="#707070"/><text transform="translate(45.8 386.64) rotate(-90)" text-anchor="middle" font-family="Liberation Sans" font-size="9.6" fill="#8a8a8a">180</text><rect x="51" y="395" width="1" height="1" fill="#666"/><rect x="51" y="405" width="1" height="1" fill="#666"/><rect x="51" y="414" width="1" height="1" fill="#666"/><rect x="51" y="423" width="1" height="1" fill="#666"/><path d="M50 433.5H52" stroke="#707070"/><rect x="51" y="442" width="1" height="1" fill="#666"/><rect x="51" y="451" width="1" height="1" fill="#666"/><rect x="51" y="460" width="1" height="1" fill="#666"/><rect x="51" y="470" width="1" height="1" fill="#666"/><path d="M47 479.5H52" stroke="#707070"/><text transform="translate(45.8 479.36) rotate(-90)" text-anchor="middle" font-family="Liberation Sans" font-size="9.6" fill="#8a8a8a">160</text><rect x="51" y="488" width="1" height="1" fill="#666"/><rect x="51" y="497" width="1" height="1" fill="#666"/><rect x="51" y="507" width="1" height="1" fill="#666"/><rect x="51" y="516" width="1" height="1" fill="#666"/><path d="M50 525.5H52" stroke="#707070"/><rect x="51" y="534" width="1" height="1" fill="#666"/><rect x="51" y="544" width="1" height="1" fill="#666"/><rect x="51" y="553" width="1" height="1" fill="#666"/><rect x="51" y="562" width="1" height="1" fill="#666"/><path d="M47 572.5H52" stroke="#707070"/><text transform="translate(45.8 572.0799999999999) rotate(-90)" text-anchor="middle" font-family="Liberation Sans" font-size="9.6" fill="#8a8a8a">140</text><rect x="51" y="581" width="1" height="1" fill="#666"/><rect x="51" y="590" width="1" height="1" fill="#666"/><rect x="51" y="599" width="1" height="1" fill="#666"/><rect x="51" y="609" width="1" height="1" fill="#666"/><path d="M50 618.5H52" stroke="#707070"/><rect x="51" y="627" width="1" height="1" fill="#666"/><rect x="51" y="636" width="1" height="1" fill="#666"/><rect x="51" y="646" width="1" height="1" fill="#666"/><rect x="51" y="655" width="1" height="1" fill="#666"/><path d="M47 664.5H52" stroke="#707070"/><rect x="51" y="674" width="1" height="1" fill="#666"/><rect x="51" y="683" width="1" height="1" fill="#666"/><rect x="51" y="692" width="1" height="1" fill="#666"/><rect x="51" y="701" width="1" height="1" fill="#666"/><path d="M50 711.5H52" stroke="#707070"/><rect x="51" y="720" width="1" height="1" fill="#666"/><text transform="translate(46.5 697) rotate(-90)" text-anchor="middle" font-family="Liberation Sans" font-size="10.5" fill="#8a8a8a">millimeters</text></svg><div class="t" style="left:173px;top:384px;font-size:39.6px;color:#222;-webkit-text-stroke:0">Вставим умляут ö</div><svg style="position:absolute;left:950px;top:166px;" width="10" height="8" viewBox="0 0 10 8"><path d="M1 6L5 2L9 6" fill="none" stroke="#444" stroke-width="2"/></svg><svg style="position:absolute;left:950px;top:695px;" width="10" height="8" viewBox="0 0 10 8"><path d="M1 2L5 6L9 2" fill="none" stroke="#444" stroke-width="2"/></svg><div style="position:absolute;left:947px;top:690px;width:16px;height:17px;background:#ececec"></div><svg style="position:absolute;left:950px;top:695px;" width="10" height="8" viewBox="0 0 10 8"><path d="M1 2L5 6L9 2" fill="none" stroke="#444" stroke-width="2"/></svg><svg style="position:absolute;left:59px;top:712px;" width="8" height="10" viewBox="0 0 8 10"><path d="M6 1L2 5L6 9" fill="none" stroke="#444" stroke-width="2"/></svg><div style="position:absolute;left:930px;top:709px;width:17px;height:16px;background:#ececec"></div><svg style="position:absolute;left:934px;top:712px;" width="8" height="10" viewBox="0 0 8 10"><path d="M2 1L6 5L2 9" fill="none" stroke="#444" stroke-width="2"/></svg><svg style="position:absolute;left:948px;top:710px;" width="14" height="14" viewBox="0 0 14 14"><circle cx="6" cy="6" r="4.5" fill="none" stroke="#444" stroke-width="1.2"/><path d="M9.5 9.5L13 13" stroke="#444" stroke-width="1.6"/><path d="M4 6H8M6 4V8" stroke="#444"/></svg><svg style="position:absolute;left:16px;top:130px;" width="12" height="18" viewBox="0 0 12 18"><path d="M2 1L10.5 9.5H6.8L9 15L7.3 16L5 10.3L2 13.5Z" fill="#222"/></svg><svg style="position:absolute;left:27px;top:143px;" width="5" height="5" viewBox="0 0 5 5"><path d="M0 5L5 0V5Z" fill="#6a6a6a"/></svg><svg style="position:absolute;left:11px;top:158px;" width="20" height="20" viewBox="0 0 20 20"><path d="M7 1.5Q3.5 5 4 10Q4.5 15 8 18.5" fill="none" stroke="#222" stroke-width="1.1"/><rect x="3" y="6.5" width="3.5" height="3.5" fill="#fff" stroke="#222"/><path d="M10.5 11L17 14.5L13 17.5Z" fill="#222"/></svg><svg style="position:absolute;left:27px;top:173px;" width="5" height="5" viewBox="0 0 5 5"><path d="M0 5L5 0V5Z" fill="#6a6a6a"/></svg><div style="position:absolute;left:10px;top:186px;width:22px;height:1px;background:#d8d8d8"></div><svg style="position:absolute;left:12px;top:196px;" width="18" height="18" viewBox="0 0 18 18"><path d="M0.5 6H12.5V17.5M6.5 1V13.5H17.5" fill="none" stroke="#222" stroke-width="2"/></svg><svg style="position:absolute;left:27px;top:208px;" width="5" height="5" viewBox="0 0 5 5"><path d="M0 5L5 0V5Z" fill="#6a6a6a"/></svg><div style="position:absolute;left:10px;top:252px;width:22px;height:1px;background:#d8d8d8"></div><svg style="position:absolute;left:12px;top:226px;" width="19" height="19" viewBox="0 0 19 19"><circle cx="7.2" cy="7.2" r="5.8" fill="none" stroke="#222" stroke-width="1.3"/><path d="M11.2 11.2L16 16" stroke="#222" stroke-width="2.2"/></svg><svg style="position:absolute;left:27px;top:240px;" width="5" height="5" viewBox="0 0 5 5"><path d="M0 5L5 0V5Z" fill="#6a6a6a"/></svg><svg style="position:absolute;left:11px;top:261px;" width="20" height="20" viewBox="0 0 20 20"><path d="M5.5 1.5V8.5M2 5H9" stroke="#222" stroke-width="1.2"/><path d="M6.5 11V18.5Q7.5 19 8 16Q8.5 14 9.5 16Q10.5 19 11.5 16Q12.5 14 13.5 16Q14.5 18.5 15.5 16Q16.5 14 17.5 16" fill="none" stroke="#222" stroke-width="1.3"/></svg><svg style="position:absolute;left:27px;top:274px;" width="5" height="5" viewBox="0 0 5 5"><path d="M0 5L5 0V5Z" fill="#6a6a6a"/></svg><svg style="position:absolute;left:11px;top:290px;" width="20" height="20" viewBox="0 0 20 20"><path d="M2.5 7Q3.5 2 6.5 2.5Q9 3 9.5 8Q10.5 16 13 16.5Q16.5 17 16.5 12Q16.5 9 14 8.5" fill="none" stroke="#222" stroke-width="1.5" stroke-linecap="round"/><path d="M9.6 9Q10.5 16 13 16.5Q16.5 17 16.5 12" fill="none" stroke="#222" stroke-width="2.6" stroke-linecap="round"/></svg><svg style="position:absolute;left:27px;top:306px;" width="5" height="5" viewBox="0 0 5 5"><path d="M0 5L5 0V5Z" fill="#6a6a6a"/></svg><svg style="position:absolute;left:12px;top:320px;" width="19" height="18" viewBox="0 0 19 18"><rect x="1" y="1" width="16" height="15.5" fill="none" stroke="#222" stroke-width="1.5"/></svg><svg style="position:absolute;left:28px;top:336px;" width="5" height="5" viewBox="0 0 5 5"><path d="M0 5L5 0V5Z" fill="#6a6a6a"/></svg><svg style="position:absolute;left:12px;top:349px;" width="19" height="19" viewBox="0 0 19 19"><circle cx="8.8" cy="8.8" r="7.8" fill="none" stroke="#222" stroke-width="1.4"/></svg><svg style="position:absolute;left:28px;top:365px;" width="5" height="5" viewBox="0 0 5 5"><path d="M0 5L5 0V5Z" fill="#6a6a6a"/></svg><svg style="position:absolute;left:12px;top:378px;" width="19" height="19" viewBox="0 0 19 19"><path d="M5 1H12.5L16.5 8.5L12.5 16H5L1 8.5Z" fill="none" stroke="#222" stroke-width="1.4"/></svg><svg style="position:absolute;left:28px;top:394px;" width="5" height="5" viewBox="0 0 5 5"><path d="M0 5L5 0V5Z" fill="#6a6a6a"/></svg><div style="position:absolute;left:10px;top:405px;width:22px;height:1px;background:#d8d8d8"></div><div style="position:absolute;left:9px;top:412px;width:24px;height:24px;background:#fafafa;border:1px solid #b4b4b4"></div><svg style="position:absolute;left:13px;top:415px;" width="16" height="17" viewBox="0 0 16 17"><path d="M1 16.5L8 0.8L15 16.5M3.5 11H12.5" fill="none" stroke="#222" stroke-width="1.4"/></svg><svg style="position:absolute;left:28px;top:431px;" width="5" height="5" viewBox="0 0 5 5"><path d="M0 5L5 0V5Z" fill="#6a6a6a"/></svg><svg style="position:absolute;left:12px;top:452px;" width="18" height="18" viewBox="0 0 18 18"><path d="M2.5 15.5L15.5 2.5" stroke="#333" stroke-width="1.3"/><path d="M0.5 13.5L4.5 17.5M13.5 0.5L17.5 4.5" stroke="#333" stroke-width="1.3"/></svg><svg style="position:absolute;left:28px;top:466px;" width="5" height="5" viewBox="0 0 5 5"><path d="M0 5L5 0V5Z" fill="#6a6a6a"/></svg><svg style="position:absolute;left:12px;top:481px;" width="19" height="19" viewBox="0 0 19 19"><path d="M3 3L15 14" stroke="#333" stroke-width="1.5"/><rect x="0.5" y="0.5" width="5" height="5" fill="#f07820" stroke="#333"/><rect x="12.5" y="12" width="5" height="5" fill="#f07820" stroke="#333"/></svg><svg style="position:absolute;left:28px;top:496px;" width="5" height="5" viewBox="0 0 5 5"><path d="M0 5L5 0V5Z" fill="#6a6a6a"/></svg><div style="position:absolute;left:10px;top:508px;width:22px;height:1px;background:#d8d8d8"></div><svg style="position:absolute;left:12px;top:518px;" width="19" height="19" viewBox="0 0 19 19"><rect x="1" y="1" width="12.5" height="12.5" fill="#fff" stroke="#222" stroke-width="1.4"/><path d="M16 4V16H4" fill="none" stroke="#222" stroke-width="2.2"/></svg><svg style="position:absolute;left:28px;top:532px;" width="5" height="5" viewBox="0 0 5 5"><path d="M0 5L5 0V5Z" fill="#6a6a6a"/></svg><svg style="position:absolute;left:12px;top:547px;" width="18" height="18" viewBox="0 0 18 18"><rect x="0.5" y="0.5" width="16" height="16" fill="#fff" stroke="#111"/><rect x="1" y="1" width="3" height="3" fill="#111"/><rect x="1" y="7" width="3" height="3" fill="#111"/><rect x="1" y="13" width="3" height="3" fill="#111"/><rect x="4" y="4" width="3" height="3" fill="#111"/><rect x="4" y="10" width="3" height="3" fill="#111"/><rect x="7" y="1" width="3" height="3" fill="#111"/><rect x="7" y="7" width="3" height="3" fill="#111"/><rect x="7" y="13" width="3" height="3" fill="#111"/><rect x="10" y="4" width="3" height="3" fill="#111"/><rect x="10" y="10" width="3" height="3" fill="#111"/><rect x="13" y="1" width="3" height="3" fill="#111"/><rect x="13" y="7" width="3" height="3" fill="#111"/><rect x="13" y="13" width="3" height="3" fill="#111"/></svg><div style="position:absolute;left:10px;top:575px;width:22px;height:1px;background:#d8d8d8"></div><svg style="position:absolute;left:12px;top:584px;" width="19" height="19" viewBox="0 0 19 19"><path d="M2.5 15.5L10 8" stroke="#222" stroke-width="3" stroke-linecap="round"/><path d="M3 15L9.5 8.5" stroke="#f07820" stroke-width="1.3" stroke-linecap="round"/><path d="M9 5.5L13 9.5" stroke="#222" stroke-width="2"/><circle cx="13.5" cy="5" r="2.8" fill="#222"/></svg><svg style="position:absolute;left:28px;top:598px;" width="5" height="5" viewBox="0 0 5 5"><path d="M0 5L5 0V5Z" fill="#6a6a6a"/></svg><svg style="position:absolute;left:11px;top:613px;" width="20" height="20" viewBox="0 0 20 20"><path d="M2 9.5L9.5 2.5L16 9L8.5 16.5Z" fill="#fff" stroke="#222" stroke-width="1.7"/><path d="M5 11H13L8.5 15Z" fill="#e0202a"/><path d="M4 6L8 2" stroke="#222" stroke-width="1.6"/><path d="M19 13V20H13Z" fill="#e0202a"/></svg><svg style="position:absolute;left:28px;top:628px;" width="5" height="5" viewBox="0 0 5 5"><path d="M0 5L5 0V5Z" fill="#6a6a6a"/></svg><div style="position:absolute;left:10px;top:641px;width:22px;height:1px;background:#d8d8d8"></div><svg style="position:absolute;left:14px;top:658px;" width="14" height="14" viewBox="0 0 14 14"><path d="M7 0V14M0 7H14" stroke="#b4b4b4" stroke-width="1.8"/></svg><div style="position:absolute;left:37px;top:748px;width:926px;height:1px;background:#dedede"></div><svg style="position:absolute;left:43px;top:731px;" width="11" height="11" viewBox="0 0 11 11"><path d="M5.5 0V11M0 5.5H11" stroke="#222" stroke-width="1.3"/></svg><svg style="position:absolute;left:66px;top:732px;" width="11" height="10" viewBox="0 0 11 10"><path d="M0.7 0V10" stroke="#b8b8b8" stroke-width="1.4"/><path d="M10 0V10L3 5Z" fill="#b8b8b8"/></svg><svg style="position:absolute;left:91px;top:732px;" width="8" height="10" viewBox="0 0 8 10"><path d="M7.5 0V10L0.5 5Z" fill="#b8b8b8"/></svg><div class="t" style="left:116px;top:732px;font-size:12.3px;color:#8c8c8c;">1&nbsp; of&nbsp; 1</div><svg style="position:absolute;left:170px;top:732px;" width="8" height="10" viewBox="0 0 8 10"><path d="M0.5 0V10L7.5 5Z" fill="#b8b8b8"/></svg><svg style="position:absolute;left:192px;top:732px;" width="11" height="10" viewBox="0 0 11 10"><path d="M10.3 0V10" stroke="#b8b8b8" stroke-width="1.4"/><path d="M1 0V10L8 5Z" fill="#b8b8b8"/></svg><svg style="position:absolute;left:215px;top:731px;" width="11" height="11" viewBox="0 0 11 11"><path d="M5.5 0V11M0 5.5H11" stroke="#222" stroke-width="1.3"/></svg><div class="t" style="left:264px;top:732px;font-size:12px;color:#000;">Page 1</div><svg style="position:absolute;left:39px;top:751px;" width="5" height="17" viewBox="0 0 5 17"><rect x="0" y="0" width="1" height="1" fill="#b0b0b0"/><rect x="2" y="2" width="1" height="1" fill="#b0b0b0"/><rect x="0" y="4" width="1" height="1" fill="#b0b0b0"/><rect x="2" y="6" width="1" height="1" fill="#b0b0b0"/><rect x="0" y="8" width="1" height="1" fill="#b0b0b0"/><rect x="2" y="10" width="1" height="1" fill="#b0b0b0"/><rect x="0" y="12" width="1" height="1" fill="#b0b0b0"/><rect x="2" y="14" width="1" height="1" fill="#b0b0b0"/><rect x="0" y="16" width="1" height="1" fill="#b0b0b0"/></svg><svg style="position:absolute;left:52px;top:755px;" width="6" height="10" viewBox="0 0 6 10"><path d="M0.5 0.5V9.5L5.5 5Z" fill="#707070"/></svg><svg style="position:absolute;left:67px;top:753px;" width="14" height="14" viewBox="0 0 14 14"><path d="M1.5 12.5L7.5 6.5" stroke="#222" stroke-width="3.2" stroke-linecap="round"/><path d="M2 12L7.5 6.5" stroke="#f07820" stroke-width="1.5" stroke-linecap="round"/><path d="M7 4L10 7" stroke="#222" stroke-width="1.8"/><circle cx="10.5" cy="3.5" r="2.5" fill="#222"/></svg><svg style="position:absolute;left:88px;top:754px;" width="8" height="11" viewBox="0 0 8 11"><path d="M7 0.5L1.5 5.5L7 10.5" fill="none" stroke="#c8c8c8" stroke-width="1.6"/></svg><div style="position:absolute;left:101px;top:751px;width:821px;height:18px;background:#555"></div><svg style="position:absolute;left:0;top:0" width="1286" height="819"><rect x="102" y="752" width="16" height="16" fill="#fff"/><path d="M104 766L116 754" stroke="#e02020" stroke-width="1.1"/><rect x="119" y="752" width="16" height="16" fill="#222222"/><rect x="136" y="752" width="16" height="16" fill="#3d3d3d"/><rect x="153" y="752" width="16" height="16" fill="#555555"/><rect x="170" y="752" width="16" height="16" fill="#6b6b6b"/><rect x="187" y="752" width="16" height="16" fill="#808080"/><rect x="204" y="752" width="16" height="16" fill="#969696"/><rect x="221" y="752" width="16" height="16" fill="#acacac"/><rect x="238" y="752" width="16" height="16" fill="#c0c0c0"/><rect x="255" y="752" width="16" height="16" fill="#d6d6d6"/><rect x="272" y="752" width="16" height="16" fill="#eaeaea"/><rect x="289" y="752" width="16" height="16" fill="#ffffff"/><rect x="306" y="752" width="16" height="16" fill="#f02a8e"/><rect x="307.5" y="761.5" width="5" height="5" fill="#777" stroke="#ddd" stroke-width="0.8"/><rect x="309" y="763" width="2" height="2" fill="#fff"/><rect x="323" y="752" width="16" height="16" fill="#9c908c"/><rect x="324.5" y="761.5" width="5" height="5" fill="#777" stroke="#ddd" stroke-width="0.8"/><rect x="326" y="763" width="2" height="2" fill="#fff"/><rect x="340" y="752" width="16" height="16" fill="#85a8b3"/><rect x="341.5" y="761.5" width="5" height="5" fill="#777" stroke="#ddd" stroke-width="0.8"/><rect x="343" y="763" width="2" height="2" fill="#fff"/><rect x="357" y="752" width="16" height="16" fill="#312783"/><rect x="374" y="752" width="16" height="16" fill="#009fe3"/><rect x="391" y="752" width="16" height="16" fill="#009640"/><rect x="408" y="752" width="16" height="16" fill="#ffed00"/><rect x="425" y="752" width="16" height="16" fill="#e30613"/><rect x="442" y="752" width="16" height="16" fill="#e6007e"/><rect x="459" y="752" width="16" height="16" fill="#ab4a8a"/><rect x="476" y="752" width="16" height="16" fill="#ef7d1a"/><rect x="493" y="752" width="16" height="16" fill="#f7adb4"/><rect x="510" y="752" width="16" height="16" fill="#7d6b63"/><rect x="527" y="752" width="16" height="16" fill="#d5d0e8"/><rect x="544" y="752" width="16" height="16" fill="#a99ccf"/><rect x="561" y="752" width="16" height="16" fill="#718ac6"/><rect x="578" y="752" width="16" height="16" fill="#7c66ab"/><rect x="595" y="752" width="16" height="16" fill="#8c87b3"/><rect x="612" y="752" width="16" height="16" fill="#4f5c8a"/><rect x="629" y="752" width="16" height="16" fill="#5c5570"/><rect x="646" y="752" width="16" height="16" fill="#70829b"/><rect x="663" y="752" width="16" height="16" fill="#0085cb"/><rect x="680" y="752" width="16" height="16" fill="#a0d7f3"/><rect x="697" y="752" width="16" height="16" fill="#b3c8d8"/><rect x="714" y="752" width="16" height="16" fill="#95a5ae"/><rect x="731" y="752" width="16" height="16" fill="#6c7b82"/><rect x="748" y="752" width="16" height="16" fill="#474f55"/><rect x="765" y="752" width="16" height="16" fill="#57706e"/><rect x="782" y="752" width="16" height="16" fill="#3f8576"/><rect x="799" y="752" width="16" height="16" fill="#749b93"/><rect x="816" y="752" width="16" height="16" fill="#53a18c"/><rect x="833" y="752" width="16" height="16" fill="#5c9d6c"/><rect x="850" y="752" width="16" height="16" fill="#5abfcd"/><rect x="867" y="752" width="16" height="16" fill="#4aa3b0"/><rect x="884" y="752" width="16" height="16" fill="#b6c8b8"/><rect x="901" y="752" width="16" height="16" fill="#d5e9d7"/><rect x="918" y="752" width="4" height="16" fill="#a3d4a6"/></svg><div style="position:absolute;left:237px;top:750px;width:19px;height:20px;border:1px solid #fff;background:#c0c0c0"></div><div style="position:absolute;left:238px;top:751px;width:17px;height:18px;border:1px solid #c0c0c0"></div><div style="position:absolute;left:849px;top:751px;width:18px;height:18px;border:2px solid #4a4a4a;background:#5abfcd"></div><svg style="position:absolute;left:925px;top:754px;" width="9" height="11" viewBox="0 0 9 11"><path d="M1 0.5L7.5 5.5L1 10.5" fill="none" stroke="#b8b8b8" stroke-width="1.8"/></svg><div class="t" style="left:941px;top:751px;font-size:17px;color:#b0b8cc;">&#187;</div><svg style="position:absolute;left:15px;top:780px;" width="21" height="21" viewBox="0 0 21 21"><g transform="translate(8.5 8.5)"><path d="M-1.3 -8H1.3L1.8 -5.6A6 6 0 0 1 3.9 -4.4L6.2 -5.3L7.5 -3.1L5.6 -1.5A6 6 0 0 1 5.6 1.5L7.5 3.1L6.2 5.3L3.9 4.4A6 6 0 0 1 1.8 5.6L1.3 8H-1.3L-1.8 5.6A6 6 0 0 1 -3.9 4.4L-6.2 5.3L-7.5 3.1L-5.6 1.5A6 6 0 0 1 -5.6 -1.5L-7.5 -3.1L-6.2 -5.3L-3.9 -4.4A6 6 0 0 1 -1.8 -5.6Z" fill="#222"/><circle r="3" fill="#f3f3f3"/></g><path d="M14 20L20 14V20Z" fill="#888"/></svg><div class="t" style="left:41px;top:784px;font-size:11.5px;color:#000;letter-spacing:-0.08px">Document color profiles: RGB: Adobe RGB (1998); CMYK: Coated FOGRA39 (ISO 12647-2:2004); Grayscale: Dot Gain 15%</div><div class="t" style="left:696px;top:784px;font-size:11.55px;color:#000;">Вставим умляут ö on Layer 1</div><svg style="position:absolute;left:873px;top:780px;" width="19" height="19" viewBox="0 0 19 19"><path d="M1.5 8.5L8.5 1.5L15.5 8.5L8.5 15.5Z" fill="#fff" stroke="#222" stroke-width="1.8"/><path d="M4 10H13L8.5 14Z" fill="#e0202a"/><path d="M18 11V18H11Z" fill="#e0202a"/></svg><div style="position:absolute;left:892px;top:778px;width:22px;height:22px;background:#222;border:1px solid #999"></div><div class="t" style="left:918px;top:784px;font-size:11.8px;color:#000;">Black</div><svg style="position:absolute;left:1077px;top:780px;" width="10" height="18" viewBox="0 0 10 18"><path d="M5 1L8.5 8L6.5 12H3.5L1.5 8Z" fill="#fff" stroke="#222" stroke-width="1.1"/><path d="M5 4V9" stroke="#222"/><rect x="2.5" y="12.5" width="5" height="4.5" fill="#fff" stroke="#222" stroke-width="1.1"/></svg><div style="position:absolute;left:1091px;top:778px;width:22px;height:22px;background:#fff;border:1px solid #999"></div><svg style="position:absolute;left:1092px;top:779px;" width="20" height="20" viewBox="0 0 20 20"><path d="M0.5 19.5L19.5 0.5" stroke="#e02020" stroke-width="1.5"/></svg><div class="t" style="left:1117px;top:784px;font-size:11.8px;color:#000;">None</div><svg style="position:absolute;left:1172px;top:762px;" width="112" height="52" viewBox="0 0 112 52"><g fill="#f7f7f7" stroke="#c0c0c0" stroke-width="0.9"><path d="M36 23Q39 6 56 5Q71 5 70 17Q66 11 56 11Q45 12 42 25Z"/><path d="M31 20L44 24L36 31Z"/><path d="M76 15Q73 32 56 33Q41 33 42 21Q46 27 56 27Q67 26 70 13Z"/><path d="M81 17L68 13L75 6Z"/><circle cx="56" cy="19" r="7"/><circle cx="56" cy="19" r="4.2"/></g><text x="3" y="49" font-family="Liberation Sans" font-weight="bold" font-style="italic" font-size="19" fill="#f8f8f8" stroke="#b8b8b8" stroke-width="0.8" textLength="104" lengthAdjust="spacingAndGlyphs">jetScreenshot</text><text x="87" y="38" font-family="Liberation Sans" font-weight="bold" font-size="7.5" fill="#f8f8f8" stroke="#bdbdbd" stroke-width="0.6">.com</text></svg><div style="position:absolute;left:966px;top:145px;width:293px;height:1px;background:#bdbdbd"></div><div class="t" style="left:974px;top:128px;font-size:11.8px;color:#000;">Glyphs</div><svg style="position:absolute;left:1244px;top:132px;" width="11" height="8" viewBox="0 0 11 8"><path d="M0.5 0.5L5 4L0.5 7.5Z M5.5 0.5L10 4L5.5 7.5Z" fill="#a8a8a8"/></svg><svg style="position:absolute;left:1262px;top:129px;" width="10" height="10" viewBox="0 0 10 10"><path d="M0.5 0.5L9.5 9.5M9.5 0.5L0.5 9.5" stroke="#a0a0a0" stroke-width="1.3"/></svg><div class="t" style="left:972px;top:152px;font-size:11.65px;color:#000;">Recent glyphs:</div><div style="position:absolute;left:971px;top:169px;width:285px;height:82px;background:#fff;border:1px solid #d4d4d4"></div><div class="t" style="left:985px;top:178px;font-size:27.5px;color:#000;-webkit-text-stroke:0">ö</div><svg style="position:absolute;left:1020px;top:181px;" width="11" height="19" viewBox="0 0 11 19"><path d="M0 0L10.5 9.5L0 19Z" fill="#000"/></svg><div class="t" style="left:1049.5px;top:176px;font-size:30px;color:#000;-webkit-text-stroke:0">Ö</div><div style="position:absolute;left:972px;top:263px;width:283px;height:24px;background:#fff;border:1px solid #adadad"></div><div style="position:absolute;left:1237px;top:264px;width:17px;height:22px;background:#e8e8e8;border-left:1px solid #d0d0d0"></div><svg style="position:absolute;left:1241px;top:273px;" width="9" height="5" viewBox="0 0 9 5"><path d="M0 0H9L4.5 5Z" fill="#6e6e6e"/></svg><div style="position:absolute;left:976px;top:267px;width:25px;height:15px;background:#0078d7"></div><div class="t" style="left:977px;top:268.5px;font-size:11.8px;color:#fff;">Arial</div><div style="position:absolute;left:972px;top:292px;width:283px;height:24px;background:#e6e6e6;border:1px solid #adadad"></div><svg style="position:absolute;left:1241px;top:302px;" width="9" height="5" viewBox="0 0 9 5"><path d="M0 0H9L4.5 5Z" fill="#6e6e6e"/></svg><div class="t" style="left:976px;top:297.5px;font-size:11.8px;color:#000;">Entire Font</div><div style="position:absolute;left:971px;top:320px;width:285px;height:355px;background:#fff;border:1px solid #d4d4d4;overflow:hidden"></div><svg style="position:absolute;left:0;top:0;clip-path:inset(325px 0 0 0)" width="1286" height="819"><text x="997.6" y="330.4" text-anchor="middle" font-family="Liberation Sans" font-size="23.5" fill="#000">æ</text><path d="M993.8000000000001 339.4H1001.4L997.6 343.0Z" fill="#c4c4c4"/><text x="1040.66" y="330.4" text-anchor="middle" font-family="Liberation Sans" font-size="23.5" fill="#000">ç</text><path d="M1036.8600000000001 339.4H1044.46L1040.66 343.0Z" fill="#c4c4c4"/><text x="1083.72" y="330.4" text-anchor="middle" font-family="Liberation Sans" font-size="23.5" fill="#000">è</text><path d="M1079.92 339.4H1087.52L1083.72 343.0Z" fill="#c4c4c4"/><text x="1126.78" y="330.4" text-anchor="middle" font-family="Liberation Sans" font-size="23.5" fill="#000">é</text><path d="M1122.98 339.4H1130.58L1126.78 343.0Z" fill="#c4c4c4"/><text x="1169.8400000000001" y="330.4" text-anchor="middle" font-family="Liberation Sans" font-size="23.5" fill="#000">ê</text><path d="M1166.0400000000002 339.4H1173.64L1169.8400000000001 343.0Z" fill="#c4c4c4"/><text x="1212.9" y="330.4" text-anchor="middle" font-family="Liberation Sans" font-size="23.5" fill="#000">ë</text><path d="M1209.1000000000001 339.4H1216.7L1212.9 343.0Z" fill="#c4c4c4"/><text x="997.6" y="371.33" text-anchor="middle" font-family="Liberation Sans" font-size="23.5" fill="#000">ì</text><path d="M993.8000000000001 380.33H1001.4L997.6 383.93Z" fill="#c4c4c4"/><text x="1040.66" y="371.33" text-anchor="middle" font-family="Liberation Sans" font-size="23.5" fill="#000">í</text><path d="M1036.8600000000001 380.33H1044.46L1040.66 383.93Z" fill="#c4c4c4"/><text x="1083.72" y="371.33" text-anchor="middle" font-family="Liberation Sans" font-size="23.5" fill="#000">î</text><path d="M1079.92 380.33H1087.52L1083.72 383.93Z" fill="#c4c4c4"/><text x="1126.78" y="371.33" text-anchor="middle" font-family="Liberation Sans" font-size="23.5" fill="#000">ï</text><path d="M1122.98 380.33H1130.58L1126.78 383.93Z" fill="#c4c4c4"/><text x="1169.8400000000001" y="371.33" text-anchor="middle" font-family="Liberation Sans" font-size="23.5" fill="#000">ð</text><path d="M1166.0400000000002 380.33H1173.64L1169.8400000000001 383.93Z" fill="#c4c4c4"/><text x="1212.9" y="371.33" text-anchor="middle" font-family="Liberation Sans" font-size="23.5" fill="#000">ñ</text><path d="M1209.1000000000001 380.33H1216.7L1212.9 383.93Z" fill="#c4c4c4"/><text x="997.6" y="412.26" text-anchor="middle" font-family="Liberation Sans" font-size="23.5" fill="#000">ò</text><path d="M993.8000000000001 421.26H1001.4L997.6 424.86Z" fill="#c4c4c4"/><text x="1040.66" y="412.26" text-anchor="middle" font-family="Liberation Sans" font-size="23.5" fill="#000">ó</text><path d="M1036.8600000000001 421.26H1044.46L1040.66 424.86Z" fill="#c4c4c4"/><text x="1083.72" y="412.26" text-anchor="middle" font-family="Liberation Sans" font-size="23.5" fill="#000">ô</text><path d="M1079.92 421.26H1087.52L1083.72 424.86Z" fill="#c4c4c4"/><text x="1126.78" y="412.26" text-anchor="middle" font-family="Liberation Sans" font-size="23.5" fill="#000">õ</text><path d="M1122.98 421.26H1130.58L1126.78 424.86Z" fill="#c4c4c4"/><text x="1169.8400000000001" y="412.26" text-anchor="middle" font-family="Liberation Sans" font-size="23.5" fill="#000">ö</text><path d="M1166.0400000000002 421.26H1173.64L1169.8400000000001 424.86Z" fill="#c4c4c4"/><text x="1212.9" y="412.26" text-anchor="middle" font-family="Liberation Sans" font-size="23.5" fill="#000">÷</text><path d="M1209.1000000000001 421.26H1216.7L1212.9 424.86Z" fill="#c4c4c4"/><text x="997.6" y="453.18999999999994" text-anchor="middle" font-family="Liberation Sans" font-size="23.5" fill="#000">ø</text><path d="M993.8000000000001 462.18999999999994H1001.4L997.6 465.78999999999996Z" fill="#c4c4c4"/><text x="1040.66" y="453.18999999999994" text-anchor="middle" font-family="Liberation Sans" font-size="23.5" fill="#000">ù</text><path d="M1036.8600000000001 462.18999999999994H1044.46L1040.66 465.78999999999996Z" fill="#c4c4c4"/><text x="1083.72" y="453.18999999999994" text-anchor="middle" font-family="Liberation Sans" font-size="23.5" fill="#000">ú</text><path d="M1079.92 462.18999999999994H1087.52L1083.72 465.78999999999996Z" fill="#c4c4c4"/><text x="1126.78" y="453.18999999999994" text-anchor="middle" font-family="Liberation Sans" font-size="23.5" fill="#000">û</text><path d="M1122.98 462.18999999999994H1130.58L1126.78 465.78999999999996Z" fill="#c4c4c4"/><text x="1169.8400000000001" y="453.18999999999994" text-anchor="middle" font-family="Liberation Sans" font-size="23.5" fill="#000">ü</text><path d="M1166.0400000000002 462.18999999999994H1173.64L1169.8400000000001 465.78999999999996Z" fill="#c4c4c4"/><text x="1212.9" y="453.18999999999994" text-anchor="middle" font-family="Liberation Sans" font-size="23.5" fill="#000">ý</text><path d="M1209.1000000000001 462.18999999999994H1216.7L1212.9 465.78999999999996Z" fill="#c4c4c4"/><text x="997.6" y="494.12" text-anchor="middle" font-family="Liberation Sans" font-size="23.5" fill="#000">þ</text><path d="M993.8000000000001 503.12H1001.4L997.6 506.72Z" fill="#c4c4c4"/><text x="1040.66" y="494.12" text-anchor="middle" font-family="Liberation Sans" font-size="23.5" fill="#000">ÿ</text><path d="M1036.8600000000001 503.12H1044.46L1040.66 506.72Z" fill="#c4c4c4"/><text x="1083.72" y="494.12" text-anchor="middle" font-family="Liberation Sans" font-size="23.5" fill="#000">Ā</text><path d="M1079.92 503.12H1087.52L1083.72 506.72Z" fill="#c4c4c4"/><text x="1126.78" y="494.12" text-anchor="middle" font-family="Liberation Sans" font-size="23.5" fill="#000">ā</text><path d="M1122.98 503.12H1130.58L1126.78 506.72Z" fill="#c4c4c4"/><text x="1169.8400000000001" y="494.12" text-anchor="middle" font-family="Liberation Sans" font-size="23.5" fill="#000">Ă</text><path d="M1166.0400000000002 503.12H1173.64L1169.8400000000001 506.72Z" fill="#c4c4c4"/><text x="1212.9" y="494.12" text-anchor="middle" font-family="Liberation Sans" font-size="23.5" fill="#000">ă</text><path d="M1209.1000000000001 503.12H1216.7L1212.9 506.72Z" fill="#c4c4c4"/><text x="997.6" y="535.05" text-anchor="middle" font-family="Liberation Sans" font-size="23.5" fill="#000">Ą</text><path d="M993.8000000000001 544.05H1001.4L997.6 547.65Z" fill="#c4c4c4"/><text x="1040.66" y="535.05" text-anchor="middle" font-family="Liberation Sans" font-size="23.5" fill="#000">ą</text><path d="M1036.8600000000001 544.05H1044.46L1040.66 547.65Z" fill="#c4c4c4"/><text x="1083.72" y="535.05" text-anchor="middle" font-family="Liberation Sans" font-size="23.5" fill="#000">Ć</text><path d="M1079.92 544.05H1087.52L1083.72 547.65Z" fill="#c4c4c4"/><text x="1126.78" y="535.05" text-anchor="middle" font-family="Liberation Sans" font-size="23.5" fill="#000">ć</text><path d="M1122.98 544.05H1130.58L1126.78 547.65Z" fill="#c4c4c4"/><text x="1169.8400000000001" y="535.05" text-anchor="middle" font-family="Liberation Sans" font-size="23.5" fill="#000">Ĉ</text><path d="M1166.0400000000002 544.05H1173.64L1169.8400000000001 547.65Z" fill="#c4c4c4"/><text x="1212.9" y="535.05" text-anchor="middle" font-family="Liberation Sans" font-size="23.5" fill="#000">ĉ</text><path d="M1209.1000000000001 544.05H1216.7L1212.9 547.65Z" fill="#c4c4c4"/><text x="997.6" y="575.98" text-anchor="middle" font-family="Liberation Sans" font-size="23.5" fill="#000">Ċ</text><path d="M993.8000000000001 584.98H1001.4L997.6 588.58Z" fill="#c4c4c4"/><text x="1040.66" y="575.98" text-anchor="middle" font-family="Liberation Sans" font-size="23.5" fill="#000">ċ</text><path d="M1036.8600000000001 584.98H1044.46L1040.66 588.58Z" fill="#c4c4c4"/><text x="1083.72" y="575.98" text-anchor="middle" font-family="Liberation Sans" font-size="23.5" fill="#000">Č</text><path d="M1079.92 584.98H1087.52L1083.72 588.58Z" fill="#c4c4c4"/><text x="1126.78" y="575.98" text-anchor="middle" font-family="Liberation Sans" font-size="23.5" fill="#000">č</text><path d="M1122.98 584.98H1130.58L1126.78 588.58Z" fill="#c4c4c4"/><text x="1169.8400000000001" y="575.98" text-anchor="middle" font-family="Liberation Sans" font-size="23.5" fill="#000">Ď</text><path d="M1166.0400000000002 584.98H1173.64L1169.8400000000001 588.58Z" fill="#c4c4c4"/><text x="1212.9" y="575.98" text-anchor="middle" font-family="Liberation Sans" font-size="23.5" fill="#000">ď</text><path d="M1209.1000000000001 584.98H1216.7L1212.9 588.58Z" fill="#c4c4c4"/><text x="997.6" y="616.91" text-anchor="middle" font-family="Liberation Sans" font-size="23.5" fill="#000">Đ</text><path d="M993.8000000000001 625.91H1001.4L997.6 629.51Z" fill="#c4c4c4"/><text x="1040.66" y="616.91" text-anchor="middle" font-family="Liberation Sans" font-size="23.5" fill="#000">đ</text><path d="M1036.8600000000001 625.91H1044.46L1040.66 629.51Z" fill="#c4c4c4"/><text x="1083.72" y="616.91" text-anchor="middle" font-family="Liberation Sans" font-size="23.5" fill="#000">Ē</text><path d="M1079.92 625.91H1087.52L1083.72 629.51Z" fill="#c4c4c4"/><text x="1126.78" y="616.91" text-anchor="middle" font-family="Liberation Sans" font-size="23.5" fill="#000">ē</text><path d="M1122.98 625.91H1130.58L1126.78 629.51Z" fill="#c4c4c4"/><text x="1169.8400000000001" y="616.91" text-anchor="middle" font-family="Liberation Sans" font-size="23.5" fill="#000">Ĕ</text><path d="M1166.0400000000002 625.91H1173.64L1169.8400000000001 629.51Z" fill="#c4c4c4"/><text x="1212.9" y="616.91" text-anchor="middle" font-family="Liberation Sans" font-size="23.5" fill="#000">ĕ</text><path d="M1209.1000000000001 625.91H1216.7L1212.9 629.51Z" fill="#c4c4c4"/><text x="997.6" y="657.8399999999999" text-anchor="middle" font-family="Liberation Sans" font-size="23.5" fill="#000">Ė</text><path d="M993.8000000000001 666.8399999999999H1001.4L997.6 670.4399999999999Z" fill="#c4c4c4"/><text x="1040.66" y="657.8399999999999" text-anchor="middle" font-family="Liberation Sans" font-size="23.5" fill="#000">ė</text><path d="M1036.8600000000001 666.8399999999999H1044.46L1040.66 670.4399999999999Z" fill="#c4c4c4"/><text x="1083.72" y="657.8399999999999" text-anchor="middle" font-family="Liberation Sans" font-size="23.5" fill="#000">Ę</text><path d="M1079.92 666.8399999999999H1087.52L1083.72 670.4399999999999Z" fill="#c4c4c4"/><text x="1126.78" y="657.8399999999999" text-anchor="middle" font-family="Liberation Sans" font-size="23.5" fill="#000">ę</text><path d="M1122.98 666.8399999999999H1130.58L1126.78 670.4399999999999Z" fill="#c4c4c4"/><text x="1169.8400000000001" y="657.8399999999999" text-anchor="middle" font-family="Liberation Sans" font-size="23.5" fill="#000">Ě</text><path d="M1166.0400000000002 666.8399999999999H1173.64L1169.8400000000001 670.4399999999999Z" fill="#c4c4c4"/><text x="1212.9" y="657.8399999999999" text-anchor="middle" font-family="Liberation Sans" font-size="23.5" fill="#000">ě</text><path d="M1209.1000000000001 666.8399999999999H1216.7L1212.9 670.4399999999999Z" fill="#c4c4c4"/></svg><div style="position:absolute;left:1235px;top:322px;width:15px;height:349px;background:#efefef"></div><div style="position:absolute;left:1236px;top:354px;width:14px;height:17px;background:#c8c8c8"></div><svg style="position:absolute;left:1238px;top:329px;" width="9" height="7" viewBox="0 0 9 7"><path d="M1 5.8L4.5 2L8 5.8" fill="none" stroke="#555" stroke-width="2"/></svg><svg style="position:absolute;left:1238px;top:659px;" width="9" height="7" viewBox="0 0 9 7"><path d="M1 1.2L4.5 5L8 1.2" fill="none" stroke="#555" stroke-width="2"/></svg><div style="position:absolute;left:1134px;top:374px;width:72px;height:56px;background:#fff"></div><svg style="position:absolute;left:1134px;top:374px;" width="72" height="56" viewBox="0 0 72 56"><path d="M15 15.5H56" stroke="#8cc8f8"/><path d="M15 25.5H56" stroke="#cde6fb"/><path d="M15 38.8H56" stroke="#1e88e5" stroke-width="1.4"/><path d="M15 43.5H56" stroke="#8cc8f8"/><text x="35.5" y="38" text-anchor="middle" font-family="Liberation Sans" font-size="23.5" fill="#000">ö</text><path d="M31.8 6H39.2L35.5 9.5Z M31.8 47H39.2L35.5 50.5Z" fill="#c4c4c4"/></svg><div style="position:absolute;left:966px;top:682px;width:293px;height:18px;background:#e6e6e6"></div><svg style="position:absolute;left:1109px;top:689px;" width="9" height="5" viewBox="0 0 9 5"><path d="M0 0H9L4.5 5Z" fill="#6e6e6e"/></svg><svg style="position:absolute;left:974px;top:708px;" width="22" height="20" viewBox="0 0 22 20"><text x="0" y="18" font-family="Liberation Sans" font-size="13" fill="#333">a ɑ</text><ellipse cx="15" cy="4" rx="4" ry="2.5" fill="none" stroke="#333"/><circle cx="15" cy="4" r="1" fill="#333"/></svg><svg style="position:absolute;left:1011px;top:708px;" width="20" height="20" viewBox="0 0 20 20"><text x="1" y="11" font-family="Liberation Sans" font-size="10" fill="#333">A</text><circle cx="11" cy="13.5" r="3" fill="none" stroke="#333" stroke-width="1.2"/><path d="M13 15.5L16 18.5" stroke="#333" stroke-width="1.4"/></svg><div style="position:absolute;left:1043px;top:717px;width:178px;height:4px;background:#e6e6e6;border:1px solid #bdbdbd"></div><div style="position:absolute;left:1089px;top:711px;width:7px;height:17px;background:#d8ecfb;border:1px solid #1e9be8"></div><svg style="position:absolute;left:1233px;top:706px;" width="22" height="23" viewBox="0 0 22 23"><text x="0" y="20" font-family="Liberation Sans" font-size="24" fill="#333" transform="scale(0.8 1)">A</text><circle cx="12.5" cy="15" r="3" fill="#f3f3f3" stroke="#333" stroke-width="1.2"/><path d="M14.5 17L17.5 20" stroke="#333" stroke-width="1.4"/></svg><div style="position:absolute;left:971px;top:743px;width:285px;height:24px;background:#e1e1e1;border:1px solid #adadad"></div><div class="t" style="left:1099px;top:750px;font-size:11.8px;color:#000;">Copy</div><div class="t" style="left:1261px;top:141px;font-size:26px;color:#333;font-family:'Liberation Serif',serif;font-style:italic">æ</div><div class="t" style="left:1262px;top:171px;font-size:11.8px;color:#000;transform-origin:0 0;transform:translate(13px,0) rotate(90deg)">Glyphs</div><svg style="position:absolute;left:1264px;top:234px;" width="13" height="13" viewBox="0 0 13 13"><path d="M6.5 0V13M0 6.5H13" stroke="#b4b4b4" stroke-width="1.8"/></svg><div style="position:absolute;left:514px;top:75px;width:199px;height:49px;border:4px solid #ff0000"></div><div style="position:absolute;left:-2px;top:387px;width:56px;height:58px;border:4px solid #ff0000"></div><div style="position:absolute;left:949px;top:245px;width:86px;height:50px;border:4px solid #ff0000"></div><div style="position:absolute;left:1130px;top:370px;width:80px;height:64px;border:4px solid #ff0000"></div></body></html>
